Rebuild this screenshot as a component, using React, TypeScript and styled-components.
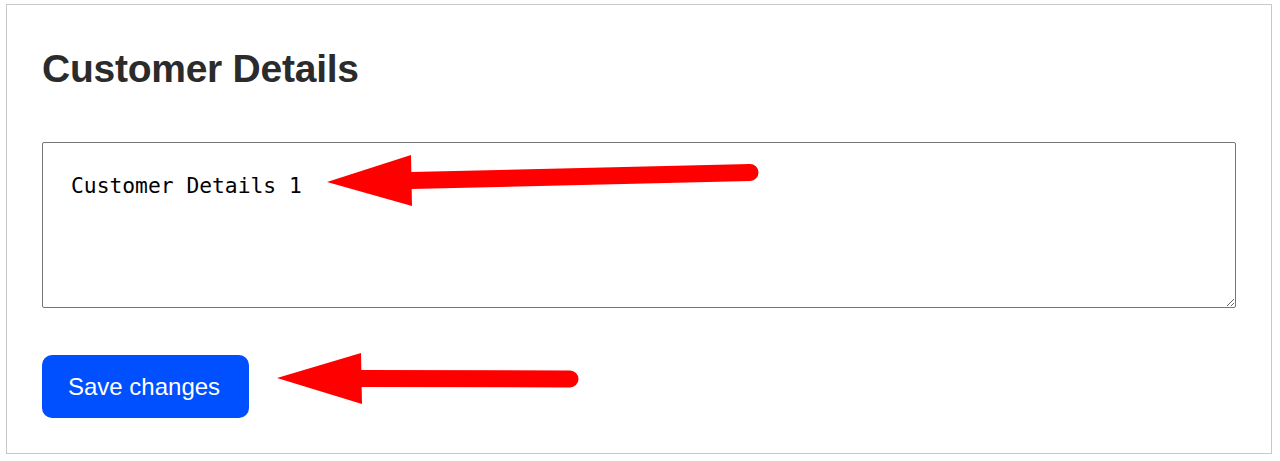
import styled, { createGlobalStyle } from "styled-components";

const GlobalStyle = createGlobalStyle`
  html, body {
    margin: 0;
    padding: 0;
    background: #ffffff;
    font-family: "Liberation Sans", Arial, sans-serif;
  }
`;

const Card = styled.section`
  position: relative;
  margin: 4px 8px 7px 6px;
  border: 1px solid #c8c8c8;
  padding: 44px 35px 35px 35px;
  display: flex;
  flex-direction: column;
  align-items: flex-start;
`;

const Title = styled.h2`
  margin: 0;
  font-size: 39px;
  line-height: 39px;
  font-weight: 700;
  letter-spacing: -0.25px;
  color: #2b2b2b;
`;

const DetailsField = styled.textarea`
  box-sizing: border-box;
  margin-top: 54px;
  width: 100%;
  height: 166px;
  padding: 31px 28px 0;
  border: 1px solid #767676;
  border-radius: 2px;
  font-family: "DejaVu Sans Mono", "Liberation Mono", monospace;
  font-size: 21.3px;
  line-height: 24px;
  color: #000000;
  resize: both;
  outline: none;
`;

const SaveButton = styled.button`
  margin-top: 47px;
  height: 63px;
  padding: 0 29px 0 26px;
  border: none;
  border-radius: 10px;
  background: #0050ff;
  color: #ffffff;
  font-family: "Liberation Sans", Arial, sans-serif;
  font-size: 24px;
  cursor: pointer;
`;

const Annotations = styled.svg`
  position: absolute;
  top: -5px;
  left: -7px;
  width: 1280px;
  height: 461px;
  pointer-events: none;
`;

const Arrow = ({ tip, back, end, half }: any) => (
  <g fill="#ff0000" stroke="#ff0000">
    <line
      x1={back[0]}
      y1={back[1]}
      x2={end[0]}
      y2={end[1]}
      strokeWidth={17}
      strokeLinecap="round"
    />
    <polygon
      stroke="none"
      points={`${tip[0]},${tip[1]} ${back[0]},${back[1] - half} ${back[0] + 1},${back[1] + half}`}
    />
  </g>
);

export default function App() {
  return (
    <>
      <GlobalStyle />
      <Card>
        <Title>Customer Details</Title>
        <DetailsField defaultValue="Customer Details 1" />
        <SaveButton>Save changes</SaveButton>
        <Annotations viewBox="0 0 1280 461">
          <Arrow tip={[327, 182]} back={[411, 180.5]} end={[750, 172.5]} half={25.5} />
          <Arrow tip={[277, 378]} back={[361, 378.5]} end={[570, 379]} half={25.5} />
        </Annotations>
      </Card>
    </>
  );
}
